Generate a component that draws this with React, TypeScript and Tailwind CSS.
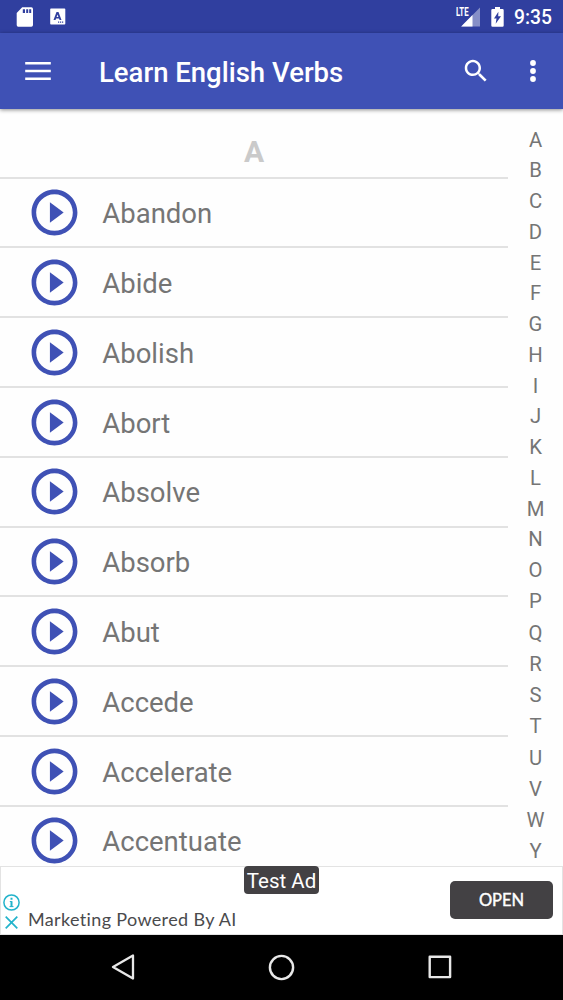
const verbs = ['Abandon', 'Abide', 'Abolish', 'Abort', 'Absolve', 'Absorb', 'Abut', 'Accede', 'Accelerate', 'Accentuate'];
const lettersTop = 'ABCDEFGHIJKLMN'.split('');
const lettersBottom = 'OPQRSTUVWY'.split('');

function StatusBar() {
  return (
    <div className="flex h-[33px] shrink-0 items-center bg-[#303f9f] pl-4 pr-[11px] text-white">
      <svg className="h-[20px] w-[17px]" viewBox="0 0 17 20">
        <path fill="#fff" fillRule="evenodd" d="M6.2 0.3H15.3Q17 0.3 17 2V18Q17 19.7 15.3 19.7H2.2Q0.7 19.7 0.7 18V6ZM6.8 2.3V6H9V2.3ZM10.2 2.3V6H12.2V2.3ZM13.2 2.3V6H15.2V2.3Z" />
      </svg>
      <svg className="ml-[17px] h-[17px] w-[16px]" viewBox="0 0 16 17">
        <path fill="#fff" fillRule="evenodd" d="M1 0.5H14.5Q15.3 0.5 15.3 1.3V15.7Q15.3 16.5 14.5 16.5H1Q0.2 16.5 0.2 15.7V1.3Q0.2 0.5 1 0.5ZM6.5 4L3.5 12H5.5L6.1 10.4H9L9.6 12H11.5L8.5 4ZM7.5 6.5L8.4 9H6.6ZM8 13.6V14.8H9.2V13.6ZM10 13.6V14.8H11.2V13.6ZM12 13.6V14.8H13.2V13.6Z" />
      </svg>
      <div className="ml-auto flex items-center">
        <div className="relative h-[22px] w-[25px]">
          <svg className="absolute inset-0" width="25" height="22" viewBox="0 0 25 22">
            <path d="M24 1.5V20.5H5.2Z" fill="#fff" opacity="0.42" />
            <path d="M16.5 9.1V20.5H5.2Z" fill="#fff" />
          </svg>
          <span className="absolute -top-[2px] left-0 origin-left scale-x-[0.6] text-[13px] font-bold leading-[16px]">LTE</span>
        </div>
        <svg className="ml-[10px] h-[20px] w-[13px]" viewBox="0 0 13 20">
          <path fill="#fff" fillRule="evenodd" d="M4 0H9V2H11.5Q12.7 2 12.7 3.2V18.5Q12.7 19.8 11.5 19.8H1.5Q0.3 19.8 0.3 18.5V3.2Q0.3 2 1.5 2H4ZM7.4 4.8L3 11.4H5.5L4.7 16.8L10 9.3H7.2Z" />
        </svg>
        <span className="ml-[10px] w-[38px] whitespace-nowrap pt-[2px] text-[19.3px] font-medium leading-[22px]">9:35</span>
      </div>
    </div>
  );
}

function AppBar() {
  return (
    <header className="z-10 flex h-[76px] shrink-0 items-center bg-[#3f51b5] pb-px text-white shadow-[0_1px_4px_rgba(0,0,0,0.45)]">
      <svg className="ml-[25px] h-[18px] w-[26px]" viewBox="0 0 26 18">
        <path d="M0.2 1.3H25.8M0.2 9H25.8M0.2 16.7H25.8" stroke="#fff" strokeWidth="2.5" />
      </svg>
      <h1 className="ml-[48px] whitespace-nowrap pt-[4px] text-[27.5px] font-medium leading-[32px]">Learn English Verbs</h1>
      <svg className="ml-auto h-[30px] w-[30px]" viewBox="0 0 24 24" fill="#fff">
        <path d="M15.5 14h-.79l-.28-.27C15.41 12.59 16 11.11 16 9.5 16 5.91 13.09 3 9.5 3S3 5.91 3 9.5 5.91 16 9.5 16c1.61 0 3.09-.59 4.23-1.57l.27.28v.79l5 4.99L20.49 19l-4.99-5zm-6 0C7.01 14 5 11.99 5 9.5S7.01 5 9.5 5 14 7.01 14 9.5 11.99 14 9.5 14z" />
      </svg>
      <svg className="ml-[39px] mr-[27px] h-[22px] w-[6px]" viewBox="0 0 6 22" fill="#fff">
        <circle cx="3" cy="3" r="2.9" />
        <circle cx="3" cy="11" r="2.9" />
        <circle cx="3" cy="19" r="2.9" />
      </svg>
    </header>
  );
}

function PlayIcon() {
  return (
    <svg className="ml-[26.8px] h-[55px] w-[55px] shrink-0" viewBox="0 0 24 24" fill="#3f51b5">
      <path d="M10 16.5l6-4.5-6-4.5v9zM12 2C6.48 2 2 6.48 2 12s4.48 10 10 10 10-4.48 10-10S17.52 2 12 2zm0 18c-4.41 0-8-3.59-8-8s3.59-8 8-8 8 3.59 8 8-3.59 8-8 8z" />
    </svg>
  );
}

function AdBanner() {
  return (
    <div className="relative flex h-[68.5px] shrink-0 border border-[#e3e3e3] bg-white">
      <div className="flex w-[21px] flex-col items-center pt-[27px]">
        <svg className="h-[17px] w-[17px]" viewBox="0 0 17 17" fill="none" stroke="#22b3cb">
          <circle cx="8.5" cy="8.5" r="7.6" strokeWidth="1.5" />
          <path d="M8.5 3.8V5.8M8.5 7.2V12.8" strokeWidth="2" />
          <path d="M6.8 7.5H8.8M6.5 12.6H10.5" strokeWidth="1" />
        </svg>
        <svg className="mt-[5px] h-[13px] w-[13px]" viewBox="0 0 13 13" stroke="#22b3cb" strokeWidth="1.7">
          <path d="M0.7 0.7L12.3 12.3M12.3 0.7L0.7 12.3" />
        </svg>
      </div>
      <span className="ml-[6px] mt-[40px] whitespace-nowrap font-['Lato',sans-serif] text-[18px] leading-[24px] tracking-[0.35px] text-[#4a4a4c]">Marketing Powered By AI</span>
      <button className="ml-auto mr-[9px] mt-[14px] h-[38px] w-[103px] rounded-[5px] bg-[#434144] font-['Lato',sans-serif] text-[16.5px] text-white [-webkit-text-stroke:0.4px_white]">OPEN</button>
      <span className="absolute left-[243px] top-[-1px] flex h-[28px] w-[75px] items-center justify-center whitespace-nowrap rounded-[4px] bg-[#434144] pt-[2px] text-[20.5px] text-white">Test Ad</span>
    </div>
  );
}

function NavBar() {
  return (
    <nav className="flex h-[65.5px] shrink-0 items-center bg-black pl-[111px]">
      <svg className="h-[26px] w-[24px]" viewBox="0 0 24 26" fill="none" stroke="#e8e8e8" strokeWidth="2.3" strokeLinejoin="round">
        <path d="M22 1.5V24.5L2 13Z" />
      </svg>
      <svg className="ml-[133px] h-[27px] w-[27px]" viewBox="0 0 27 27" fill="none" stroke="#e8e8e8" strokeWidth="2.4">
        <circle cx="13.5" cy="13.5" r="11.6" />
      </svg>
      <svg className="ml-[133px] h-[24px] w-[24px]" viewBox="0 0 24 24" fill="none" stroke="#e8e8e8" strokeWidth="2.4" strokeLinejoin="round">
        <rect x="1.7" y="1.7" width="20.4" height="20.4" />
      </svg>
    </nav>
  );
}

export default function App() {
  return (
    <div className="flex h-[1000px] w-[563px] flex-col overflow-hidden bg-[#fefefe] font-['Roboto',sans-serif]">
      <StatusBar />
      <AppBar />
      <main className="flex h-[757px] shrink-0 overflow-hidden">
        <div className="w-[508px]">
          <div className="flex h-[69.7px] items-end justify-center border-b-2 border-[#e2e2e2] pb-[9px] text-[30px] font-bold leading-[32px] text-[#cacaca]">A</div>
          {verbs.map((verb) => (
            <div key={verb} className="flex h-[69.8px] items-center border-b-2 border-[#e2e2e2] pt-[0.4px]">
              <PlayIcon />
              <span className="ml-[20.5px] pt-[3px] text-[27.5px] leading-[32px] text-[#757575]">{verb}</span>
            </div>
          ))}
        </div>
        <div className="flex w-[55px] flex-col items-center pt-[15.6px] text-[20.3px] text-[#757575]">
          {lettersTop.map((l) => (
            <span key={l} className="h-[30.75px] leading-[30.75px]">{l}</span>
          ))}
          {lettersBottom.map((l) => (
            <span key={l} className="h-[31.25px] leading-[31.25px]">{l}</span>
          ))}
        </div>
      </main>
      <AdBanner />
      <NavBar />
    </div>
  );
}
